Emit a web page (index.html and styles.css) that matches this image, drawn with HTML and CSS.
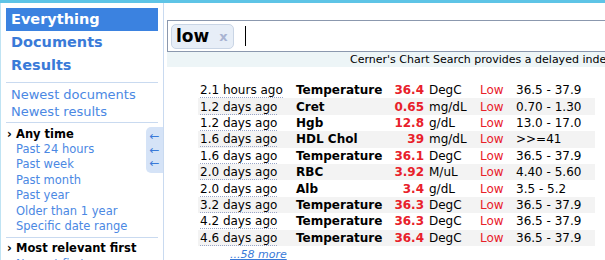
FILE: index.html
```html
<!DOCTYPE html>
<html lang="en">
<head>
  <meta charset="UTF-8" />
  <title>Chart Search</title>
  <link rel="stylesheet" href="styles.css">
</head>
<body>

<div class="page">
  <!-- Left filters -->
  <div class="sidebar">
    <div class="nav">
      <a class="nav-item active">Everything</a>
      <a class="nav-item">Documents</a>
      <a class="nav-item">Results</a>
    </div>

    <div class="group links">
      <a>Newest documents</a>
      <a>Newest results</a>
    </div>

    <div class="group">
      <div class="group-title">Any time</div>
      <a>Past 24 hours</a>
      <a>Past week</a>
      <a>Past month</a>
      <a>Past year</a>
      <a>Older than 1 year</a>
      <a>Specific date range</a>
    </div>

    <div class="group last">
      <div class="group-title">Most relevant first</div>
      <a>Newest first</a>
    </div>

    <div class="collapse">
      <span>&larr;</span>
      <span>&larr;</span>
      <span>&larr;</span>
    </div>
  </div>

  <!-- Search + results -->
  <div class="main">
    <div class="search-box">
      <span class="chip">low <b class="chip-x">x</b></span>
      <span class="cursor"></span>
    </div>
    <div class="info">Cerner's Chart Search provides a delayed index of the patient chart. Recent data may not yet appear.</div>

    <table class="results">
      <colgroup>
        <col style="width: 98px">
        <col style="width: 92px">
        <col style="width: 36px">
        <col style="width: 56px">
        <col style="width: 36px">
        <col>
      </colgroup>
      <tr><td class="when"><span>2.1 hours ago</span></td><td class="name">Temperature</td><td class="val">36.4</td><td class="unit">DegC</td><td class="flag">Low</td><td class="range">36.5 - 37.9</td></tr>
      <tr><td class="when"><span>1.2 days ago</span></td><td class="name">Cret</td><td class="val">0.65</td><td class="unit">mg/dL</td><td class="flag">Low</td><td class="range">0.70 - 1.30</td></tr>
      <tr><td class="when"><span>1.2 days ago</span></td><td class="name">Hgb</td><td class="val">12.8</td><td class="unit">g/dL</td><td class="flag">Low</td><td class="range">13.0 - 17.0</td></tr>
      <tr><td class="when"><span>1.6 days ago</span></td><td class="name">HDL Chol</td><td class="val">39</td><td class="unit">mg/dL</td><td class="flag">Low</td><td class="range">&gt;&gt;=41</td></tr>
      <tr><td class="when"><span>1.6 days ago</span></td><td class="name">Temperature</td><td class="val">36.1</td><td class="unit">DegC</td><td class="flag">Low</td><td class="range">36.5 - 37.9</td></tr>
      <tr><td class="when"><span>2.0 days ago</span></td><td class="name">RBC</td><td class="val">3.92</td><td class="unit">M/uL</td><td class="flag">Low</td><td class="range">4.40 - 5.60</td></tr>
      <tr><td class="when"><span>2.0 days ago</span></td><td class="name">Alb</td><td class="val">3.4</td><td class="unit">g/dL</td><td class="flag">Low</td><td class="range">3.5 - 5.2</td></tr>
      <tr><td class="when"><span>3.2 days ago</span></td><td class="name">Temperature</td><td class="val">36.3</td><td class="unit">DegC</td><td class="flag">Low</td><td class="range">36.5 - 37.9</td></tr>
      <tr><td class="when"><span>4.2 days ago</span></td><td class="name">Temperature</td><td class="val">36.3</td><td class="unit">DegC</td><td class="flag">Low</td><td class="range">36.5 - 37.9</td></tr>
      <tr><td class="when"><span>4.6 days ago</span></td><td class="name">Temperature</td><td class="val">36.4</td><td class="unit">DegC</td><td class="flag">Low</td><td class="range">36.5 - 37.9</td></tr>
    </table>
    <a class="more">...58 more</a>
  </div>
</div>

</body>
</html>
```

FILE: styles.css
```css
body {
  margin: 0;
  background: white;
  font-family: "DejaVu Sans", Verdana, sans-serif;
  font-size: 12px;
  color: #000;
  overflow: hidden;
  border-top: 3px solid #5ec4e6;
  height: 257px;
}

a {
  cursor: pointer;
}

.page {
  display: flex;
  height: 100%;
}

/* Sidebar */
.sidebar {
  position: relative;
  width: 152px;
  flex-shrink: 0;
  padding: 5px 5px 0 5px;
  border-left: 1px solid #bfe3f3;
  border-right: 1px solid #c9daf0;
  overflow: hidden;
}

.nav {
  margin-bottom: 5px;
}

.nav-item {
  display: block;
  height: 23px;
  line-height: 23px;
  padding-left: 5px;
  font-size: 14.5px;
  font-weight: bold;
  color: #3a7ad8;
}

.nav-item.active {
  background: #3b82e0;
  color: white;
}

.group {
  border-top: 1px solid #c9daf0;
  padding: 3px 0;
}

.group a {
  display: block;
  padding-left: 10px;
  font-size: 11.5px;
  line-height: 15.4px;
  color: #4b88e3;
}

.group.links {
  padding: 3px 0 2px;
}

.group.links a {
  padding-left: 5px;
  font-size: 13px;
  line-height: 17px;
}

.group.last {
  padding-top: 2px;
}

.group.last a {
  line-height: 16px;
}

.group-title {
  font-weight: bold;
  font-size: 11.5px;
  line-height: 16px;
  padding-left: 10px;
  position: relative;
}

.group-title::before {
  content: "\203A";
  position: absolute;
  left: 1px;
  font-weight: bold;
}

.collapse {
  position: absolute;
  top: 124px;
  right: 0;
  width: 17px;
  height: 46px;
  background: #d5e3f7;
  border-radius: 5px 0 0 5px;
  display: flex;
  flex-direction: column;
  justify-content: center;
  align-items: center;
  gap: 1px;
}

.collapse span {
  color: #3a7ad8;
  font-size: 12px;
  line-height: 12.5px;
}

/* Main */
.main {
  flex: 1;
  padding: 17px 0 0 3px;
  min-width: 0;
}

.search-box {
  width: 700px;
  height: 30px;
  border: 1px solid #8b98ae;
  display: flex;
  align-items: center;
  padding-left: 3px;
}

.chip {
  display: inline-flex;
  align-items: center;
  height: 23px;
  padding: 0 5px 0 4px;
  background: #e7eef7;
  border: 1px solid #c9d5e5;
  border-radius: 5px;
  font-size: 17px;
  font-weight: bold;
  gap: 10px;
}

.chip-x {
  color: #a9b4d2;
  font-size: 13px;
}

.cursor {
  width: 1px;
  height: 20px;
  background: #000;
  margin-left: 11px;
}

.info {
  width: 700px;
  height: 15px;
  line-height: 15px;
  background: #edf5f7;
  font-size: 11px;
  white-space: nowrap;
  overflow: hidden;
  padding-left: 183px;
  box-sizing: border-box;
}

/* Results */
.results {
  border-collapse: collapse;
  table-layout: fixed;
  margin: 15px 0 0 31px;
  width: 397px;
}

.results td {
  padding: 0;
  height: 16.4px;
  line-height: 16px;
  white-space: nowrap;
}

.results tr:nth-child(even) {
  background: #f3f3f3;
}

.when {
  padding-left: 2px !important;
}

.when span {
  border-bottom: 1px dotted #9aa6c8;
}

.name {
  font-weight: bold;
}

.val {
  color: #e8202a;
  font-weight: bold;
  text-align: right;
}

.unit {
  padding-left: 5px !important;
}

.flag {
  color: #e8202a;
}

.more {
  display: block;
  margin: 2px 0 0 63px;
  font-size: 11px;
  font-style: italic;
  color: #3a7ad8;
  text-decoration: underline;
}
```
